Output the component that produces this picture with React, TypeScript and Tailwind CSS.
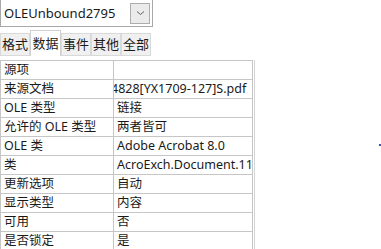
import React from 'react';

const rows: [string, string][] = [
  ['源项', ''],
  ['来源文档', '4828[YX1709-127]S.pdf'],
  ['OLE 类型', '链接'],
  ['允许的 OLE 类型', '两者皆可'],
  ['OLE 类', 'Adobe Acrobat 8.0'],
  ['类', 'AcroExch.Document.11'],
  ['更新选项', '自动'],
  ['显示类型', '内容'],
  ['可用', '否'],
  ['是否锁定', '是'],
];

const tabs = ['格式', '数据', '事件', '其他', '全部'];

export default function App() {
  return (
    <div
      className="relative w-[381px] h-[249px] overflow-hidden bg-white text-[12.5px] text-[#1a1a1a]"
      style={{ fontFamily: '"Noto Sans", "Noto Sans CJK SC", sans-serif' }}
    >
      {/* combo box */}
      <div className="flex items-center w-[153px] h-[27px] border border-[#a8a8a8] border-t-0 bg-white pl-[3px] text-[13px]">
        <span className="flex-1 leading-none pt-[1px]">OLEUnbound2795</span>
        <div className="w-[20px] h-[21px] mr-[2px] flex items-center justify-center bg-[#ebebeb] border border-[#adadad]">
          <svg width="9" height="6" viewBox="0 0 9 6">
            <path d="M1 1.5 L4.5 4.5 L8 1.5" fill="none" stroke="#606060" strokeWidth="1" />
          </svg>
        </div>
      </div>

      {/* tabs */}
      <div className="flex items-end mt-[3px] h-[26px] text-[13px]">
        {tabs.map((t, i) => (
          <div
            key={t}
            className={
              i === 1
                ? 'h-[26px] w-[31px] flex items-center justify-center bg-white border border-b-0 border-[#d0d0d0] leading-none'
                : 'h-[23px] w-[30px] flex items-center justify-center bg-[#f0f0f0] border border-[#d9d9d9] leading-none'
            }
          >
            {t}
          </div>
        ))}
      </div>

      {/* property table */}
      <div className="mt-[4px] flex">
        <div className="w-[253px] border-l border-t border-[#c6c6c6]">
          {rows.map(([k, v]) => (
            <div key={k} className="flex h-[19px] border-b border-[#c6c6c6]">
              <div className="w-[113px] pl-[3px] pt-[1px] border-r border-[#c6c6c6] flex items-center whitespace-nowrap overflow-hidden leading-none">
                {k}
              </div>
              <div className="flex-1 pl-[3px] pt-[1px] border-r border-[#c6c6c6] flex items-center whitespace-nowrap overflow-hidden leading-none">
                <span className={k === '来源文档' ? 'ml-[-6px]' : ''}>{v}</span>
              </div>
            </div>
          ))}
        </div>
        <div className="w-[1px] ml-[1px] bg-[#d4d4d4]" />
      </div>

      <div className="absolute left-[379px] top-[144px] w-[2px] h-[2px] bg-[#3a4fd0]" />
    </div>
  );
}
